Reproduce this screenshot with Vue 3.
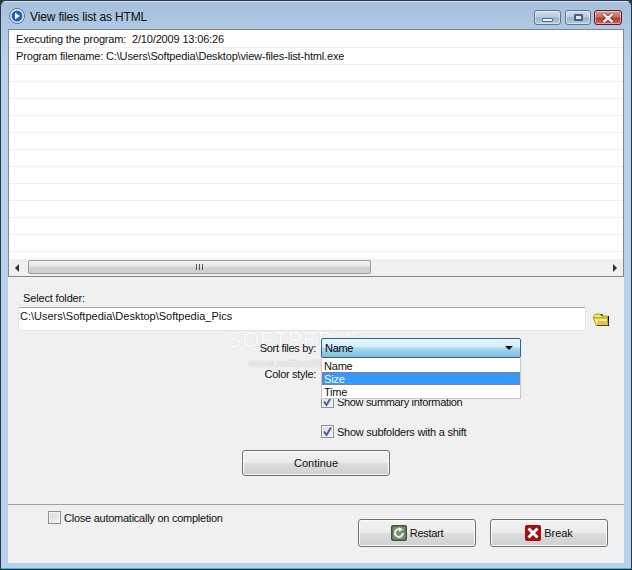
<script setup>
const rows = Array.from({ length: 13 }, (_, i) => i)
</script>

<template>
  <div class="window">
    <header class="titlebar">
      <svg class="app-icon" width="16" height="16" viewBox="0 0 16 16">
        <circle cx="8" cy="8" r="7.5" fill="#e8eef6" stroke="#5b6f90" stroke-width="1" />
        <circle cx="8" cy="8" r="5.5" fill="#1c62c8" />
        <path d="M6 4.6 L11 8 L6 11.4 Z" fill="#fff" />
      </svg>
      <span class="title">View files list as HTML</span>
      <div class="caption">
        <div class="cap cap-min"><span class="min-glyph"></span></div>
        <div class="cap cap-max"><span class="max-glyph"></span></div>
        <div class="cap cap-close">
          <svg width="14" height="10" viewBox="0 0 14 10">
            <path d="M2.5 1 L11.5 9 M11.5 1 L2.5 9" stroke="#7a3030" stroke-width="4" fill="none" />
            <path d="M2.5 1 L11.5 9 M11.5 1 L2.5 9" stroke="#f4eeee" stroke-width="2.4" fill="none" />
          </svg>
        </div>
      </div>
    </header>

    <main class="client">
      <section class="log">
        <div class="log-lines">
          <div class="log-row tight">Executing the program:&nbsp; 2/10/2009 13:06:26</div>
          <div class="log-row tight">Program filename: C:\Users\Softpedia\Desktop\view-files-list-html.exe</div>
          <div v-for="r in rows" :key="r" class="log-row"></div>
        </div>
        <div class="hscroll">
          <svg class="arrow" width="5" height="8" viewBox="0 0 5 8"><path d="M4 0 L0 4 L4 8 Z" fill="#333" /></svg>
          <div class="track">
            <div class="thumb"><span class="grip"></span></div>
          </div>
          <svg class="arrow" width="5" height="8" viewBox="0 0 5 8"><path d="M1 0 L5 4 L1 8 Z" fill="#333" /></svg>
        </div>
      </section>

      <section class="form">
        <div class="watermark">SOFTPEDIA<sup>™</sup></div>
        <div class="watermark-url">www.softpedia.com</div>

        <label class="folder-label tight">Select folder:</label>
        <div class="folder-row">
          <div class="path">C:\Users\Softpedia\Desktop\Softpedia_Pics</div>
          <svg class="folder" width="17" height="14" viewBox="0 0 17 14">
            <path d="M1 3 L3 1 H8 L9.5 3 H15 V13 H3 L1 8 Z" fill="#000" transform="translate(1 0)" />
            <path d="M.5 3.5 L2.5 1 H7 L8.5 3 H14.5 V5 H.5 Z" fill="#f3e27a" stroke="#a8a400" stroke-width="1" />
            <path d="M.5 5 H14.5 L15 12 H3 Z" fill="#f7e994" stroke="#a8a400" stroke-width="1" />
            <path d="M4 8 H14 V11.5 H5 Z" fill="#e3bb66" />
          </svg>
        </div>

        <div class="options">
          <div class="opt-row sort-row">
            <span class="opt-label tighter">Sort files by:</span>
            <div class="select-wrap">
              <div class="select">
                <span class="tighter">Name</span>
                <span class="caret"></span>
              </div>
              <ul class="popup">
                <li>Name</li>
                <li class="active">Size</li>
                <li>Time</li>
              </ul>
            </div>
          </div>
          <div class="opt-row color-row">
            <span class="opt-label tighter">Color style:</span>
          </div>
          <div class="check-row summary">
            <span class="opt-spacer"></span>
            <span class="check checked">
              <svg width="11" height="11" viewBox="0 0 11 11"><path d="M2 5.5 L4.5 9 L9 1.5" fill="none" stroke="#4a5f9e" stroke-width="2" /></svg>
            </span>
            <span class="tightest">Show summary information</span>
          </div>
          <div class="check-row subfolders">
            <span class="opt-spacer"></span>
            <span class="check checked">
              <svg width="11" height="11" viewBox="0 0 11 11"><path d="M2 5.5 L4.5 9 L9 1.5" fill="none" stroke="#4a5f9e" stroke-width="2" /></svg>
            </span>
            <span class="snug">Show subfolders with a shift</span>
          </div>
        </div>

        <div class="continue-row">
          <button class="btn continue">Continue</button>
        </div>
      </section>

      <footer class="footer">
        <div class="auto-close">
          <span class="check"></span>
          <span class="snug">Close automatically on completion</span>
        </div>
        <div class="actions">
          <button class="btn action">
            <svg width="16" height="16" viewBox="0 0 16 16">
              <rect width="16" height="16" rx="2" fill="#3f5538" />
              <rect x="1.5" y="1.5" width="13" height="13" rx="1" fill="#76916f" />
              <path d="M11.8 8 A3.9 3.9 0 1 1 9.6 4.5" fill="none" stroke="#eef3ea" stroke-width="2" />
              <path d="M8 2 L12 4.6 L8.2 7 Z" fill="#eef3ea" />
            </svg>
            <span class="tighter">Restart</span>
          </button>
          <button class="btn action">
            <svg width="16" height="16" viewBox="0 0 16 16">
              <rect width="16" height="16" rx="2" fill="#a30e0e" />
              <path d="M3.5 3.5 L12.5 12.5 M12.5 3.5 L3.5 12.5" stroke="#fff" stroke-width="3" />
            </svg>
            <span>Break</span>
          </button>
        </div>
      </footer>
    </main>
  </div>
</template>

<style>
html, body { margin: 0; background: #2a3340; }
</style>

<style scoped>
.window {
  width: 632px;
  height: 570px;
  box-sizing: border-box;
  display: flex;
  flex-direction: column;
  background: linear-gradient(180deg, #a6c0dc 0, #b9d1ea 60px, #b9d1ea 100%);
  border: 1px solid #2b3a4c;
  border-bottom: 1px solid #0d2a35;
  box-shadow: inset 0 -1px 0 #2fc4dc;
  border-radius: 6px 6px 0 0;
  font: 11px "Liberation Sans", Arial, sans-serif;
  color: #111;
  overflow: hidden;
}
.tight { letter-spacing: -0.16px; }
.snug { letter-spacing: -0.25px; }
.tighter { letter-spacing: -0.3px; }
.tightest { letter-spacing: -0.33px; }
.titlebar {
  height: 28px;
  display: flex;
  align-items: center;
  flex: none;
  padding-left: 8px;
  position: relative;
  box-shadow: inset 0 1px 0 #d8e4f0;
}
.app-icon { margin-right: 5px; margin-top: 2px; }
.title { font-size: 12px; letter-spacing: -0.15px; color: #0d0d0d; margin-top: 3px; }
.caption {
  margin-left: auto;
  margin-right: 9px;
  display: flex;
  gap: 3px;
  align-self: flex-start;
  margin-top: 9px;
}
.cap {
  height: 15px;
  box-sizing: border-box;
  border: 1px solid #5f7590;
  border-radius: 3px;
  display: flex;
  align-items: center;
  justify-content: center;
  box-shadow: inset 0 0 0 1px rgba(255,255,255,.45);
}
.cap-min, .cap-max { background: linear-gradient(180deg, #d0deec 0, #b8cadf 48%, #9bb2cc 52%, #b6cbe0 100%); }
.cap-min { width: 27px; margin-right: 1px; }
.cap-max { width: 26px; }
.cap-close {
  width: 28px;
  border-color: #5a2026;
  background: linear-gradient(180deg, #d9968c 0, #c66a5e 48%, #b03c30 52%, #c5675a 100%);
}
.min-glyph { width: 9px; height: 2px; margin-top: 4px; background: #e8edf3; border: 1px solid #5a6b80; border-radius: 1px; }
.max-glyph { width: 5px; height: 3px; border: 2px solid #4f6076; background: #dfe7f0; border-radius: 1px; }

.client {
  flex: 1;
  margin: 0 7px 6px;
  background: #f0f0f0;
  display: flex;
  flex-direction: column;
  min-height: 0;
}
.log {
  height: 248px;
  flex: none;
  box-sizing: border-box;
  border: 1px solid #7f8792;
  background: #fff;
  display: flex;
  flex-direction: column;
}
.log-lines { flex: 1; overflow: hidden; padding-top: 1px; }
.log-row {
  height: 15px;
  padding-top: 1px;
  line-height: 15px;
  padding-left: 7px;
  border-bottom: 1px solid #efefef;
  white-space: pre;
  color: #111;
}
.hscroll {
  flex: none;
  height: 17px;
  background: #f0f0f0;
  display: flex;
  align-items: center;
  padding: 0 6px;
  gap: 8px;
}
.track { flex: 1; display: flex; height: 15px; align-items: center; }
.thumb {
  width: 343px;
  height: 14px;
  margin-top: -1px;
  box-sizing: border-box;
  border: 1px solid #9a9a9a;
  border-radius: 2px;
  background: linear-gradient(180deg, #f2f2f2 0, #e6e6e6 45%, #d2d2d2 50%, #cfcfcf 100%);
  display: flex;
  align-items: center;
  justify-content: center;
}
.grip {
  width: 7px;
  height: 6px;
  background: repeating-linear-gradient(90deg, #555 0 1px, transparent 1px 3px);
}

.form {
  position: relative;
  flex: 1;
  padding: 14px 14px 0 10px;
  display: flex;
  flex-direction: column;
}
.watermark {
  position: absolute;
  left: 219px;
  top: 50px;
  font-size: 22px;
  letter-spacing: 0.5px;
  color: #fbfbfb;
  text-shadow: 0 0 1px #c4c4c4;
}
.watermark sup { font-size: 7px; }
.watermark-url {
  position: absolute;
  left: 241px;
  top: 80px;
  font-size: 11px;
  letter-spacing: 0.4px;
  color: #f8f8f8;
  text-shadow: 0 0 1px #999;
}
.folder-label { margin-left: 5px; line-height: 14px; position: relative; }
.folder-row { display: flex; align-items: center; margin-top: 2px; }
.path {
  width: 568px;
  height: 24px;
  box-sizing: border-box;
  background: #fff;
  border: 1px solid #e2e3ea;
  border-top-color: #ababab;
  border-radius: 2px;
  padding: 1px 0 0 1px;
  line-height: 15px;
  position: relative;
}
.folder { margin-left: 7px; margin-top: 1px; }

.options { margin-top: 7px; position: relative; }
.opt-row { display: flex; position: relative; }
.opt-label, .opt-spacer {
  width: 303px;
  text-align: right;
  flex: none;
  box-sizing: border-box;
  padding-right: 5px;
}
.sort-row { height: 20px; align-items: center; }
.select-wrap { position: relative; }
.select {
  width: 200px;
  height: 20px;
  box-sizing: border-box;
  border: 1px solid #2c628b;
  border-radius: 2px;
  background: linear-gradient(180deg, #e6f5fc 0, #d3edf9 45%, #a8d8f0 50%, #7fbfe0 100%);
  display: flex;
  align-items: center;
  justify-content: space-between;
  padding: 0 7px 0 3px;
  position: relative;
  z-index: 2;
  color: #000;
}
.caret {
  width: 0;
  height: 0;
  border-left: 4px solid transparent;
  border-right: 4px solid transparent;
  border-top: 4px solid #111;
}
.popup {
  position: absolute;
  left: 0;
  top: 20px;
  width: 200px;
  box-sizing: border-box;
  margin: 0;
  padding: 1px 0 0;
  list-style: none;
  background: #fff;
  border: 1px solid #c8c8c8;
  border-top: 0;
  z-index: 3;
  letter-spacing: -0.2px;
}
.popup li { height: 13px; line-height: 15px; padding-left: 2px; }
.popup .active {
  background: #3399ff;
  color: #fff;
  outline: 1px dotted #d96a10;
  outline-offset: -1px;
}
.color-row { margin-top: 9px; height: 14px; line-height: 14px; }
.check-row { display: flex; align-items: center; height: 13px; }
.opt-spacer { padding: 0; }
.summary { margin-top: 14px; }
.subfolders { margin-top: 17px; }
.check {
  width: 13px;
  height: 13px;
  box-sizing: border-box;
  border: 1px solid #8e8f8f;
  background: linear-gradient(135deg, #d9d9d9, #f4f4f4);
  box-shadow: inset 0 0 0 1px #f4f4f4;
  display: inline-flex;
  align-items: center;
  justify-content: center;
  margin-right: 3px;
  flex: none;
}
.continue-row { margin-top: 12px; padding-left: 224px; }
.btn {
  font: inherit;
  color: #111;
  box-sizing: border-box;
  border: 1px solid #707070;
  border-radius: 3px;
  background: linear-gradient(180deg, #f2f2f2 0, #ebebeb 48%, #dddddd 52%, #cfcfcf 100%);
  box-shadow: inset 0 0 0 1px #fafafa;
  padding: 0;
}
.continue { width: 148px; height: 26px; }

.footer {
  flex: none;
  height: 58px;
  border-top: 1px solid #a0a0a0;
  display: flex;
  position: relative;
}
.auto-close {
  display: flex;
  align-items: flex-start;
  margin-left: 40px;
  padding-top: 6px;
}
.auto-close span:last-child { line-height: 15px; }
.actions {
  margin-left: auto;
  margin-right: 16px;
  margin-top: 14px;
  display: flex;
  gap: 14px;
  height: 28px;
}
.action {
  width: 118px;
  height: 28px;
  display: flex;
  align-items: center;
  justify-content: center;
  gap: 3px;
  line-height: 16px;
}
</style>
